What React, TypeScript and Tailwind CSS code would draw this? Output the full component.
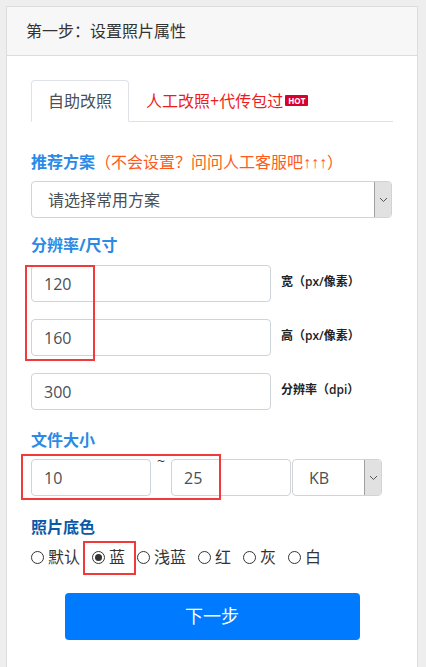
import React from "react";

const font = { fontFamily: '"Open Sans", "Noto Sans CJK SC", sans-serif' };

function Chevron() {
  return (
    <svg width="9" height="6" viewBox="0 0 9 6" fill="none" stroke="#555" strokeWidth="1">
      <path d="M1 1l3.5 3.5L8 1" />
    </svg>
  );
}

function FakeSelect({ text, className }: { text: string; className: string }) {
  return (
    <div className={`flex h-[37px] items-stretch rounded-[4px] border border-[#ced4da] bg-white ${className}`}>
      <span className="flex flex-1 items-center pl-4 text-[16px] text-[#495057]">{text}</span>
      <span className="flex w-[17px] items-center justify-center rounded-r-[3px] border-l border-[#a0a0a0] bg-[#e1e1e1]">
        <Chevron />
      </span>
    </div>
  );
}

function NumInput({ value, className }: { value: string; className: string }) {
  return (
    <div className={`flex h-[37px] items-center rounded-[4px] border border-[#ced4da] bg-white pl-3 text-[16px] text-[#495057] ${className}`}>
      {value}
    </div>
  );
}

function Radio({ label, checked }: { label: string; checked?: boolean }) {
  return (
    <label className="flex items-center gap-[4px]">
      <span className="flex h-[13px] w-[13px] items-center justify-center rounded-full border border-[#333] bg-white">
        {checked && <span className="h-[7px] w-[7px] rounded-full bg-[#333]" />}
      </span>
      <span>{label}</span>
    </label>
  );
}

export default function App() {
  return (
    <div className="min-h-screen bg-[#eeeeee] pl-[6px] pr-[8px] pt-[6px]" style={font}>
      <div className="border border-[#dcdcdc] bg-white">
        {/* 卡片头部 */}
        <div className="flex h-[49px] items-center border-b border-[#dcdcdc] bg-[#f7f7f7] px-[19px] text-[16px] text-[#333]">
          第一步：设置照片属性
        </div>

        <div className="px-[24px] pb-[30px] pt-[24px]">
          {/* Tabs */}
          <div className="flex items-end border-b border-[#dee2e6]">
            <div className="-mb-px flex h-[42px] items-center rounded-t-[4px] border border-[#dee2e6] border-b-white bg-white px-4 text-[16px] text-[#495057]">
              自助改照
            </div>
            <div className="flex h-[41px] items-center pl-[17px] text-[16px] text-[#ee1c1c]">
              人工改照+代传包过
              <span className="ml-[2px] rounded-[1px] bg-[#d9002b] px-[3px] text-[8px] font-bold leading-[11px] text-white">HOT</span>
            </div>
          </div>

          {/* 推荐方案 */}
          <div className="mt-[28px] text-[16px] leading-[24px]">
            <span className="font-bold text-[#2a8ae6]">推荐方案</span>
            <span className="text-[#ff5a1a]">
              （不会设置？问问人工客服吧<span style={{ fontFamily: '"Liberation Sans", sans-serif' }}>↑↑↑</span>）
            </span>
          </div>
          <FakeSelect text="请选择常用方案" className="mt-[6px] w-[361px]" />

          {/* 分辨率/尺寸 */}
          <div className="mt-[15px] text-[16px] font-bold leading-[24px] text-[#2a8ae6]">分辨率/尺寸</div>
          <div className="relative mt-[8px] flex flex-col gap-[17px]">
            <div className="flex items-center gap-[10px]">
              <NumInput value="120" className="w-[240px]" />
              <span className="-mt-[4px] text-[12px] font-semibold text-[#222]">宽（px/像素）</span>
            </div>
            <div className="flex items-center gap-[10px]">
              <NumInput value="160" className="w-[240px]" />
              <span className="-mt-[4px] text-[12px] font-semibold text-[#222]">高（px/像素）</span>
            </div>
            <div className="flex items-center gap-[10px]">
              <NumInput value="300" className="w-[240px]" />
              <span className="-mt-[4px] text-[12px] font-semibold text-[#222]">分辨率（dpi）</span>
            </div>
            <div className="absolute left-[-6px] top-0 h-[96px] w-[70px] border-2 border-[#f23a3a]" />
          </div>

          {/* 文件大小 */}
          <div className="mt-[18px] text-[16px] font-bold leading-[24px] text-[#2a8ae6]">文件大小</div>
          <div className="relative mt-[7px] flex items-start">
            <NumInput value="10" className="w-[120px]" />
            <span className="-mt-[5px] w-[20px] pl-[6px] text-[14px] leading-[14px] text-[#333]">~</span>
            <NumInput value="25" className="w-[120px]" />
            <FakeSelect text="KB" className="ml-[1px] w-[90px]" />
            <div className="absolute left-[-10px] top-[-5px] h-[46px] w-[200px] border-2 border-[#f23a3a]" />
          </div>

          {/* 照片底色 */}
          <div className="mt-[19px] text-[16px] font-bold leading-[24px] text-[#0a5aa8]">照片底色</div>
          <div className="relative mt-[6px] flex items-center gap-[12px] text-[16px] leading-[24px] text-[#333]">
            <Radio label="默认" />
            <Radio label="蓝" checked />
            <Radio label="浅蓝" />
            <Radio label="红" />
            <Radio label="灰" />
            <Radio label="白" />
            <div className="absolute left-[52px] top-[-4px] h-[34px] w-[53px] border-2 border-[#f23a3a]" />
          </div>

          {/* 下一步 */}
          <div className="mt-[24px] flex justify-center">
            <button className="h-[47px] w-[295px] rounded-[4px] bg-[#007bff] text-[18px] text-white">下一步</button>
          </div>
        </div>
      </div>
    </div>
  );
}
